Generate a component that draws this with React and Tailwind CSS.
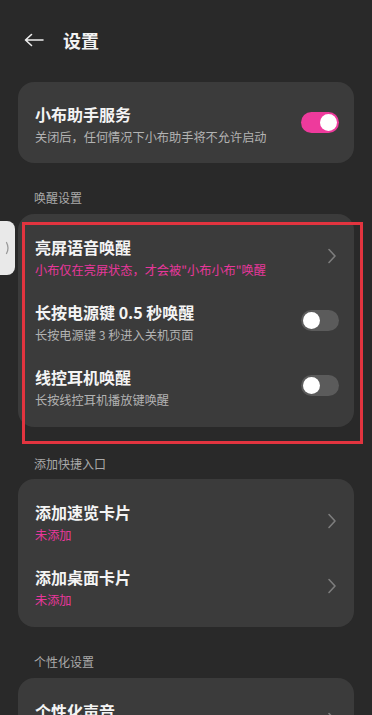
import React from "react";

const font = { fontFamily: '"Noto Sans CJK SC", "Noto Sans", sans-serif' };

function Toggle({ on }) {
  return (
    <div
      className={
        "relative w-[38px] h-[21px] rounded-full shrink-0 " +
        (on ? "bg-[#ee3a9c]" : "bg-[#5b5b5b]")
      }
    >
      <div
        className={
          "absolute top-[2px] w-[17px] h-[17px] rounded-full bg-white " +
          (on ? "right-[2px]" : "left-[2px]")
        }
      />
    </div>
  );
}

function Chevron() {
  return (
    <svg width="10" height="16" viewBox="0 0 10 16" className="shrink-0 mr-[2px]">
      <path d="M2 1.5 L8 8 L2 14.5" fill="none" stroke="#7d7d7d" strokeWidth="1.6" strokeLinecap="round" strokeLinejoin="round" />
    </svg>
  );
}

function Row({ title, sub, pink, right }) {
  return (
    <div className="flex items-center h-[65px] pl-[17px] pr-[15px]">
      <div className="flex-1 flex flex-col pt-[4px]">
        <div className="text-[16px] leading-[22px] font-bold text-[#f4f4f4]">{title}</div>
        <div
          className={
            "text-[12.2px] leading-[18px] min-h-[18px] mt-[3px] " +
            (pink ? "text-[#e8379b]" : "text-[#b3b3b3]")
          }
        >
          {sub}
        </div>
      </div>
      {right}
    </div>
  );
}

function Card({ children, className = "" }) {
  return (
    <div className={"mx-[18px] bg-[#3b3b3b] rounded-[16px] py-[8px] " + className}>
      {children}
    </div>
  );
}

function Label({ children, className = "" }) {
  return (
    <div className={"px-[34px] text-[12px] leading-[18px] text-[#a9a9a9] " + className}>
      {children}
    </div>
  );
}

export default function App() {
  return (
    <div className="relative w-[372px] h-[715px] overflow-hidden bg-[#292929]" style={font}>
      <div className="flex items-center h-[82px] pl-[24px] pb-[2px]">
        <svg width="20" height="14" viewBox="0 0 20 14">
          <path d="M19 7 H2 M7.5 1.5 L1.5 7 L7.5 12.5" fill="none" stroke="#ededed" strokeWidth="1.6" strokeLinecap="round" strokeLinejoin="round" />
        </svg>
        <div className="ml-[19px] text-[18px] leading-[24px] font-bold text-[#f2f2f2]">设置</div>
      </div>

      <Card>
        <Row title="小布助手服务" sub="关闭后，任何情况下小布助手将不允许启动" right={<Toggle on />} />
      </Card>

      <Label className="pt-[26px] pb-[7px]">唤醒设置</Label>
      <Card className="py-[9px]">
        <Row title="亮屏语音唤醒" sub={'小布仅在亮屏状态，才会被"小布小布"唤醒'} pink right={<Chevron />} />
        <Row title="长按电源键 0.5 秒唤醒" sub="长按电源键 3 秒进入关机页面" right={<Toggle />} />
        <Row title="线控耳机唤醒" sub="长按线控耳机播放键唤醒" right={<Toggle />} />
      </Card>

      <Label className="pt-[28px] pb-[6px]">添加快捷入口</Label>
      <Card className="py-[9px]">
        <Row title="添加速览卡片" sub="未添加" pink right={<Chevron />} />
        <Row title="添加桌面卡片" sub="未添加" pink right={<Chevron />} />
      </Card>

      <Label className="pt-[26px] pb-[7px]">个性化设置</Label>
      <Card className="py-[9px]">
        <Row title="个性化声音" sub="" right={<Chevron />} />
      </Card>

      <div className="absolute left-[22px] top-[222px] w-[341px] h-[222px] border-[3px] border-[#e2343f]" />

      <div className="absolute left-0 top-[221px] w-[15px] h-[54px] bg-[#e9e9e9] rounded-r-[8px] flex items-center justify-center">
        <svg width="6" height="14" viewBox="0 0 6 14">
          <path d="M1.5 1.5 Q4.5 7 1.5 12.5" fill="none" stroke="#9a9a9a" strokeWidth="1.3" strokeLinecap="round" />
        </svg>
      </div>
    </div>
  );
}
